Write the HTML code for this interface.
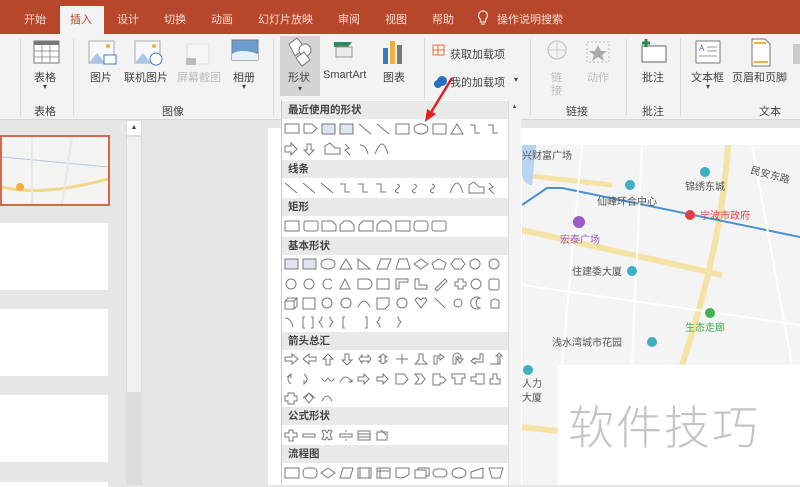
<!DOCTYPE html>
<html><head><meta charset="utf-8">
<style>
*{margin:0;padding:0;box-sizing:border-box}
body{width:800px;height:485px;overflow:hidden;position:relative;background:#e6e6e6;font-family:"Liberation Sans","Noto Sans CJK SC",sans-serif;color:#444}
.abs{position:absolute}
.tabbar{left:0;top:0;width:800px;height:34px;background:#b7472a}
.tab{position:absolute;top:11px;font-size:11px;color:#f6ddd5}
.seltab{left:60px;top:6px;width:44px;height:30px;background:#f3f3f3}
.ribbon{left:0;top:34px;width:800px;height:86px;background:#f3f3f3;border-bottom:1px solid #d6d6d6}
.lbl{position:absolute;font-size:11px;color:#444;white-space:nowrap}
.sep{position:absolute;top:38px;width:1px;height:78px;background:#dcdcdc}
.dd{left:281px;top:100px;width:239px;height:385px;background:#fff;border-left:1px solid #c8c8c8}
.hd{position:absolute;left:0;width:226px;height:18px;background:#e9e9e9;font-size:10.5px;color:#444;padding-left:6px;line-height:18px;font-weight:bold}
.row{position:absolute;left:2px}
</style></head><body>
<div class="abs tabbar"></div>
<div class="abs seltab"></div>
<div class="tab" style="left:24px">开始</div>
<div class="tab" style="left:70px;color:#b7472a">插入</div>
<div class="tab" style="left:117px">设计</div>
<div class="tab" style="left:164px">切换</div>
<div class="tab" style="left:211px">动画</div>
<div class="tab" style="left:258px">幻灯片放映</div>
<div class="tab" style="left:338px">审阅</div>
<div class="tab" style="left:385px">视图</div>
<div class="tab" style="left:432px">帮助</div>
<svg class="abs" style="left:477px;top:10px" width="12" height="16"><path d="M6 1a4.5 4.5 0 0 0-2.5 8.2V12h5V9.2A4.5 4.5 0 0 0 6 1zM4 14h4" fill="none" stroke="#f6ddd5" stroke-width="1.3"/></svg>
<div class="tab" style="left:497px">操作说明搜索</div>

<div class="abs ribbon"></div>
<div class="sep" style="left:20px"></div><div class="sep" style="left:73px"></div><div class="sep" style="left:273px"></div>
<div class="sep" style="left:424px"></div><div class="sep" style="left:530px"></div><div class="sep" style="left:626px"></div><div class="sep" style="left:680px"></div>
<svg class="abs" style="left:0;top:36px" width="800" height="60">
<rect x="34" y="5" width="25" height="22" fill="#fff" stroke="#777"/><rect x="34" y="5" width="25" height="4" fill="#777"/><path d="M34 15h25M34 21h25M42 9v18M50 9v18" stroke="#999"/>
<rect x="89" y="5" width="25" height="22" fill="#f8f8f8" stroke="#aaa"/><path d="M89 27l8-10 8 10z" fill="#a9c6e4"/><circle cx="108" cy="10" r="2" fill="#f0b040"/><rect x="104" y="19" width="12" height="9" fill="#fff" stroke="#3a7ac8"/>
<rect x="135" y="5" width="25" height="22" fill="#f8f8f8" stroke="#aaa"/><path d="M135 27l8-10 8 10z" fill="#a9c6e4"/><circle cx="154" cy="10" r="2" fill="#f0b040"/><circle cx="156" cy="23" r="6" fill="#fff" stroke="#3a7ac8"/>
<rect x="187" y="8" width="22" height="20" fill="#f5f5f5" stroke="#ddd"/><rect x="186" y="22" width="10" height="7" rx="1" fill="#bbb"/>
<rect x="232" y="4" width="26" height="20" fill="#6a9fcf" stroke="#777"/><path d="M232 18q8-6 26 0v6h-26z" fill="#e6f1f9"/>
<rect x="280" y="0" width="40" height="64" fill="#d4d4d4"/>
<path d="M289 8l8-6 8 10-10 8z" fill="#fff" stroke="#777"/><circle cx="305" cy="14" r="6" fill="#fff" stroke="#777"/><path d="M296 22l8-6 6 8-8 6z" fill="#fff" stroke="#777"/>
<path d="M334 6h18l-4 5h-14z" fill="#2f8a5a"/><path d="M336 11h16v10h-16z" fill="#eaeaea" stroke="#999"/>
<rect x="383" y="12" width="5" height="16" fill="#3a7ac8"/><rect x="390" y="5" width="5" height="23" fill="#f0b040"/><rect x="397" y="9" width="5" height="19" fill="#777"/>
<rect x="433" y="9" width="11" height="10" fill="none" stroke="#e07040"/><path d="M433 14h11M438 9v10" stroke="#e07040"/>
<circle cx="442" cy="45" r="5" fill="#2a6fc0"/><circle cx="438" cy="48" r="4" fill="#2a6fc0"/>
<circle cx="557" cy="14" r="9" fill="none" stroke="#bbb"/><path d="M548 14h18M557 5v18" stroke="#ccc"/>
<rect x="587" y="6" width="22" height="20" fill="none" stroke="#bbb" stroke-dasharray="2 2"/><path d="M598 9l3 6h6l-5 4 2 6-6-4-6 4 2-6-5-4h6z" fill="#aaa"/>
<rect x="642" y="10" width="24" height="16" fill="#fff" stroke="#666"/><path d="M642 7h8M646 3v8" stroke="#2f8a5a" stroke-width="3"/>
<rect x="696" y="5" width="24" height="22" fill="#fff" stroke="#777"/><text x="699" y="15" font-size="8" fill="#3a7ac8" font-family="Liberation Sans">A</text><path d="M707 11h10M707 15h10M699 20h18" stroke="#999"/>
<path d="M752 3h13l5 5v22h-18z" fill="#fff" stroke="#777"/><rect x="754" y="6" width="12" height="2" fill="#f0b040"/><rect x="754" y="25" width="14" height="2" fill="#f0b040"/>
<rect x="793" y="8" width="7" height="20" fill="#ccc"/>
</svg>
<div class="lbl" style="left:34px;top:69px">表格</div><div class="lbl" style="left:43px;top:82px;font-size:8px">▾</div>
<div class="lbl" style="left:90px;top:69px">图片</div>
<div class="lbl" style="left:124px;top:69px">联机图片</div>
<div class="lbl" style="left:177px;top:69px;color:#bbb">屏幕截图</div>
<div class="lbl" style="left:233px;top:69px">相册</div><div class="lbl" style="left:242px;top:82px;font-size:8px">▾</div>
<div class="lbl" style="left:288px;top:69px">形状</div><div class="lbl" style="left:298px;top:84px;font-size:8px">▾</div>
<div class="lbl" style="left:323px;top:69px">SmartArt</div>
<div class="lbl" style="left:383px;top:69px">图表</div>
<div class="lbl" style="left:450px;top:46px">获取加载项</div>
<div class="lbl" style="left:450px;top:74px">我的加载项</div><div class="lbl" style="left:514px;top:75px;font-size:8px">▾</div>
<div class="lbl" style="left:551px;top:69px;color:#bbb">链</div><div class="lbl" style="left:551px;top:82px;color:#bbb">接</div>
<div class="lbl" style="left:587px;top:69px;color:#bbb">动作</div>
<div class="lbl" style="left:642px;top:69px">批注</div>
<div class="lbl" style="left:691px;top:69px">文本框</div><div class="lbl" style="left:706px;top:82px;font-size:8px">▾</div>
<div class="lbl" style="left:732px;top:69px">页眉和页脚</div>
<div class="lbl" style="left:34px;top:103px">表格</div>
<div class="lbl" style="left:162px;top:103px">图像</div>
<div class="lbl" style="left:566px;top:103px">链接</div>
<div class="lbl" style="left:642px;top:103px">批注</div>
<div class="lbl" style="left:759px;top:103px">文本</div>

<div class="abs" style="left:0;top:135px;width:110px;height:71px;border:2px solid #d26a4a;background:#f4f4f2"></div>
<svg class="abs" style="left:2px;top:137px" width="106" height="67"><path d="M0 50q40 10 106-8" stroke="#f2d78a" stroke-width="3" fill="none"/><path d="M0 20L106 30" stroke="#b7c9e0" fill="none"/><path d="M30 0v67M70 0L60 67" stroke="#e8e8e8" stroke-width="2"/><circle cx="18" cy="50" r="4" fill="#f0b040"/></svg>
<div class="abs" style="left:0;top:223px;width:108px;height:67px;background:#fff"></div>
<div class="abs" style="left:0;top:309px;width:108px;height:67px;background:#fff"></div>
<div class="abs" style="left:0;top:395px;width:108px;height:67px;background:#fff"></div>
<div class="abs" style="left:0;top:482px;width:108px;height:5px;background:#fff"></div>
<div class="abs" style="left:126px;top:120px;width:16px;height:365px;background:#dcdcdc"></div>
<div class="abs" style="left:127px;top:121px;width:14px;height:14px;background:#fff;font-size:7px;text-align:center;line-height:14px">▲</div>
<div class="abs" style="left:127px;top:137px;width:14px;height:255px;background:#f0f0f0"></div>
<div class="abs" style="left:268px;top:128px;width:14px;height:357px;background:#fff"></div>

<div class="abs" style="left:520px;top:128px;width:280px;height:357px;background:#fff"></div>
<svg class="abs" style="left:522px;top:145px" width="278" height="220">
<rect width="278" height="220" fill="#f4f4f4"/>
<path d="M0 85L200 130" stroke="#f5e2a5" stroke-width="6"/><path d="M0 30L90 40" stroke="#f5e2a5" stroke-width="5"/>
<path d="M206 0Q200 100 160 220" stroke="#f5e2a5" stroke-width="6" fill="none"/>
<path d="M0 60L25 43L40 43L278 92" stroke="#4a90d0" stroke-width="2" fill="none"/>
<path d="M60 0L40 220M120 0L110 220M0 140L278 180M230 0L270 220" stroke="#fff" stroke-width="2"/>
<path d="M0 0L14 0L10 40Q2 40 0 30z" fill="#b8d4f0"/>
<g font-size="10" font-family="Liberation Sans,Noto Sans CJK SC,sans-serif">
<text x="0" y="14" fill="#555">兴财富广场</text>
<circle cx="108" cy="40" r="5" fill="#3bb0c0"/><text x="75" y="60" fill="#555">仙峰环合中心</text>
<circle cx="183" cy="27" r="5" fill="#3bb0c0"/><text x="163" y="45" fill="#555">锦绣东城</text>
<text x="228" y="28" fill="#555" transform="rotate(15 228 28)">民安东路</text>
<circle cx="168" cy="70" r="5" fill="#e04040"/><text x="178" y="74" fill="#e04040">宁波市政府</text>
<circle cx="57" cy="77" r="6" fill="#9a5ac8"/><text x="38" y="98" fill="#9a5ac8">宏泰广场</text>
<text x="50" y="130" fill="#555">住建委大厦</text><circle cx="110" cy="126" r="5" fill="#3bb0c0"/>
<circle cx="188" cy="168" r="5" fill="#40b050"/><text x="163" y="186" fill="#40b050">生态走廊</text>
<text x="30" y="201" fill="#555">浅水湾城市花园</text><circle cx="130" cy="197" r="5" fill="#3bb0c0"/>
</g></svg>
<svg class="abs" style="left:522px;top:365px" width="36" height="120"><rect width="36" height="120" fill="#f4f4f4"/><circle cx="6" cy="5" r="5" fill="#3bb0c0"/><text x="0" y="22" font-size="10" fill="#555" font-family="Noto Sans CJK SC">人力</text><text x="0" y="36" font-size="10" fill="#555" font-family="Noto Sans CJK SC">大厦</text><path d="M0 62L36 66" stroke="#f5e2a5" stroke-width="6"/></svg>
<div class="abs" style="left:568px;top:392px;font-size:46px;color:#c4c4c4;letter-spacing:2px;font-family:'Noto Sans CJK SC',sans-serif;font-weight:300">软件技巧</div>

<div class="abs dd">
<div class="hd" style="top:1px">最近使用的形状</div>
<div class="hd" style="top:60px">线条</div>
<div class="hd" style="top:98px">矩形</div>
<div class="hd" style="top:137px">基本形状</div>
<div class="hd" style="top:232px">箭头总汇</div>
<div class="hd" style="top:307px">公式形状</div>
<div class="hd" style="top:345px">流程图</div>
<div class="abs" style="left:226px;top:0;width:13px;height:385px;background:#f3f3f3;border-left:1px solid #ddd"></div>
<div class="abs" style="left:227px;top:4px;width:11px;font-size:6px;text-align:center;color:#555">▲</div>
<svg class="abs" style="left:0;top:0" width="226" height="385" fill="none" stroke="#777" stroke-width="1">
<g transform="translate(3,24)"><rect x="0" y="0" width="14" height="9"/><path d="M19 0h8l5 4.5-5 4.5h-8z"/><rect x="37" y="0" width="13" height="10" fill="#dde6f0"/><rect x="55" y="0" width="13" height="10" fill="#dde6f0"/><path d="M74 0l12 10M92 0l12 10"/><rect x="111" y="0" width="13" height="10"/><ellipse cx="136" cy="5" rx="7" ry="5"/><rect x="148" y="0" width="13" height="10"/><path d="M166 10l6-10 6 10z"/><path d="M185 1h5v8h5M203 1h5v8h5"/></g>
<g transform="translate(3,44)"><path d="M0 2h6v-3l6 6-6 6v-3h-6z"/><path d="M22 0h4v6h3l-5 5-5-5h3z"/><path d="M40 10v-8l5-3 5 5 5 0v6z"/><path d="M60 0l4 4-4 2 5 5"/><path d="M75 1q6 0 8 9M90 10q4-10 7-10 3 0 6 10"/></g>
<g transform="translate(3,83)"><path d="M0 0l12 10M18 0l12 10M36 0l12 10M55 1h5v8h5M73 1h5v8h5M91 1h5v8h5M112 1q5 2 0 5q-4 3 2 4M129 1q5 2 0 5q-4 3 2 4M147 1q5 2 0 5q-4 3 2 4M165 10q4-10 7-10 3 0 6 10M184 10v-8l5-3 5 5 5 0v6z M204 0l4 4-4 2 5 5"/></g>
<g transform="translate(3,121)"><rect x="0" y="0" width="14" height="10"/><rect x="19" y="0" width="14" height="10" rx="2"/><path d="M37 10v-10h10l4 4v6z M55 10v-6l4-4h6l4 4v6z M74 10v-6l4-4h10v10z M92 10v-6l4-4h6l4 4v6z"/><rect x="111" y="0" width="14" height="10"/><rect x="129" y="0" width="14" height="10" rx="3"/><rect x="147" y="0" width="14" height="10" rx="2"/></g>
<g transform="translate(3,159)"><rect x="0" y="0" width="13" height="10" fill="#dde6f0"/><rect x="18" y="0" width="13" height="10" fill="#dde6f0"/><ellipse cx="43" cy="5" rx="7" ry="5"/><path d="M55 10l6-10 6 10z M73 10v-10l12 10z M92 10l4-10h10l-4 10z M111 10l3-10h8l3 10z"/><path d="M136 0l7 5-7 5-7-5z"/><path d="M154 0l7 4-2 6h-10l-2-6z"/><path d="M170 0h6l4 5-4 5h-6l-4-5z"/><circle cx="190" cy="5" r="5"/><circle cx="209" cy="5" r="5"/></g>
<g transform="translate(3,179)"><circle cx="6" cy="5" r="5"/><circle cx="24" cy="5" r="5"/><path d="M47 2a5 5 0 1 0 0 6M55 10h10l-5-10z"/><path d="M73 0h9a5 5 0 0 1 0 10h-9z"/><rect x="92" y="0" width="12" height="10"/><path d="M111 10v-10h12v3h-9v7zM130 0v10h12v-4h-8v-6zM150 10l10-10 2 2-10 10z"/><path d="M170 3h3v-3h5v3h3v4h-3v3h-5v-3h-3z"/><circle cx="191" cy="5" r="5"/><rect x="204" y="0" width="10" height="11" rx="2"/></g>
<g transform="translate(3,198)"><path d="M0 3h9v8h-9zM0 3l3-3h9l-3 3M12 0v8l-3 3"/><rect x="18" y="0" width="12" height="11"/><circle cx="42" cy="5" r="5"/><circle cx="61" cy="5" r="5"/><path d="M73 9q6-12 12 0"/><path d="M92 0h12v7l-4 4h-8z"/><circle cx="117" cy="5" r="5"/><path d="M130 2q3-4 6 0 3-4 6 0l-6 8z"/><path d="M150 0l10 10"/><circle cx="173" cy="5" r="4"/><path d="M195 0a6 6 0 1 0 0 10a4 5 0 1 1 0-10z"/><path d="M206 3q4-4 8 0v7h-8z"/></g>
<g transform="translate(3,217)"><path d="M0 1q6 0 8 9M20 0h-2v11h2M26 0h2v11h-2M38 0q-2 0-2 3l-2 2 2 2q0 3 2 3M44 0q2 0 2 3l2 2-2 2q0 3-2 3M60 0h-2v11h2M80 0h2v11h-2M96 0q-2 0-2 3l-2 2 2 2q0 3 2 3M112 0q2 0 2 3l2 2-2 2q0 3-2 3"/></g>
<g transform="translate(3,254)"><path d="M0 3h7v-3l6 5-6 5v-3h-7z M31 3h-7v-3l-6 5 6 5v-3h7z M41 11v-6h-3l5-5 5 5h-3v6z M60 0v6h-3l5 5 5-5h-3v-6z M74 5l3-4v2h6v-2l3 4-3 4v-2h-6v2z M98 0l4 3h-2v4h2l-4 3-4-3h2v-4h-2z M111 5h12M117 0v10 M130 10h12l-4-4v-6h-4v6z M149 10v-8h6v-2l4 3-4 3v-2h-3v6z M168 10v-7a4 4 0 0 1 8 0v2h2l-3 4-3-4h2v-2h-3v7z M187 5h8v-5h3v8h-8v2l-4-3 4-3v1 M205 10h8v-8h-2l3-3 3 3h-2v8h-10z"/></g>
<g transform="translate(3,274)"><path d="M6 0q-6 5 0 10M2 3l4-3v4 M19 0q6 5 0 10M22 7l-3 3v-4 M37 4q2 6 6 0 4 6 6 0 M55 8q5-10 12 0M63 8l4 0v-3 M73 3h6v-3l5 5-5 5v-3h-6z M92 3h6v-3l5 5-5 5v-3h-6z M111 0h8l4 5-4 5h-8z M130 0h6l4 5-4 5h-6l4-5z M148 0h7v3h3l3 3-3 3h-3v2h-7z M167 0h13v4h-3v6h-7v-6h-3z M186 3h5v-3h8v10h-8v-3h-5z M205 10v-5h3v-5h4v5h3v5z"/></g>
<g transform="translate(3,293)"><path d="M3 0h6v3h3v5h-3v3h-6v-3h-3v-5h3z M24 0l4 5-4 5-4-5z M18 5l6-5 6 5M37 8q5-10 10 0"/></g>
<g transform="translate(3,330)"><path d="M4 0h4v3h4v4h-4v4h-4v-4h-4v-4h4z M18 4h12v3h-12z M37 1l3-1 2 3 2-3 3 1-2 4 2 4-3 1-2-3-2 3-3-1 2-4z M55 4h12v3h-12zM60 1h2M60 10h2 M73 1h12v9h-12zM73 4h12M73 7h12 M92 2h10v8h-10zM96 0l5 5"/></g>
<g transform="translate(3,368)"><rect x="0" y="0" width="14" height="10"/><rect x="18" y="0" width="14" height="10" rx="4"/><path d="M36 5l7-5 7 5-7 5z M55 10l3-10h10l-3 10z"/><rect x="73" y="0" width="13" height="10"/><path d="M75 0v10M84 0v10"/><rect x="92" y="0" width="13" height="10"/><path d="M92 3h13M95 0v10"/><path d="M111 0h13v6q-6 6-13 3z M130 2h11v8h-11z M133 2v-2h11v8h-3"/><rect x="148" y="1" width="14" height="8" rx="4"/><ellipse cx="174" cy="5" rx="7" ry="5"/><path d="M186 4l12-4v10h-12z M204 0h14l-3 10h-8z"/></g>
</svg>
</div>
<svg class="abs" style="left:420px;top:70px" width="40" height="60"><path d="M32 8L10 44" stroke="#e02020" stroke-width="2.5"/><path d="M5 52l2-13 9 5z" fill="#e02020"/></svg>
</body></html>
